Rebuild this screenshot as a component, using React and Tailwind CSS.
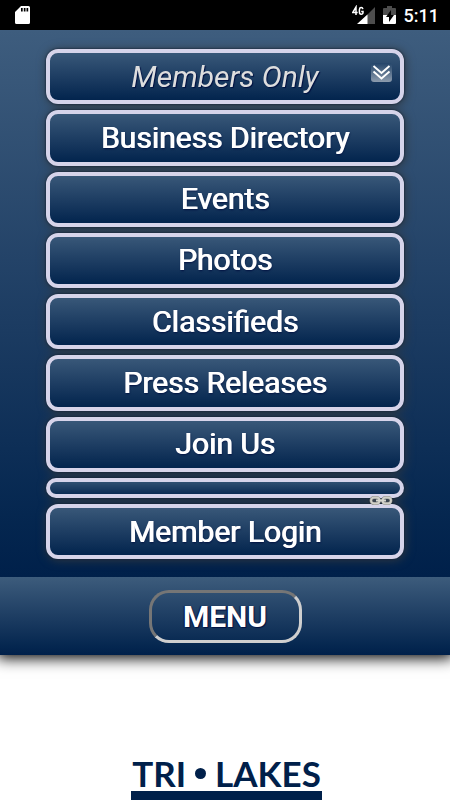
import React from "react";

const links = [
  "Business Directory",
  "Events",
  "Photos",
  "Classifieds",
  "Press Releases",
  "Join Us",
];

const panel =
  "relative flex w-full items-center justify-center rounded-[12px] border-4 border-[#d6d4ea] bg-linear-to-b from-[#3d5c7c] to-[#00204a] bg-origin-border";

const label =
  "text-[30px] leading-9 text-white [text-shadow:1px_0_0_#fff,1px_1px_2px_#001040]";

function StatusBar() {
  return (
    <header className="flex h-[30px] items-center justify-between bg-black pr-[11px] pl-[15px] text-white">
      <svg width="15" height="18" viewBox="0 0 15 18" aria-hidden="true">
        <path
          fill="#fff"
          fillRule="evenodd"
          d="M6 0h7.500a1.500 1.500 0 0 1 1.500 1.500v15a1.500 1.500 0 0 1-1.500 1.500h-12A1.500 1.500 0 0 1 0 16.500V6zM6 2v3.500h1.700V2zM8.800 2v3.500h1.700V2zM11.500 2v3.500h1.700V2z"
        />
      </svg>
      <div className="flex items-center">
        <svg width="24" height="20" viewBox="0 0 24 20" aria-hidden="true">
          <path fill="#4d4d4d" d="M23 2v17H6z" />
          <path fill="#fff" d="M15.500 9.500V19H5z" />
          <g fill="none" stroke="#fff" strokeWidth="1.500">
            <path d="M4 10V2L.8 7.400h4.900" />
            <path d="M10.900 4.200C10.500 1.900 7.400 2 7.400 4.700v2.200c0 3 3.500 2.900 3.600.8V6.400H9.200" />
          </g>
        </svg>
        <svg className="ml-[7px]" width="13" height="20" viewBox="0 0 13 20" aria-hidden="true">
          <path fill="#4d4d4d" d="M4 1h5v2h3q1 0 1 1v7H0V4q0-1 1-1h3z" />
          <path fill="#fff" d="M0 10h13v8q0 1-1 1H1q-1 0-1-1z" />
          <path fill="#000" d="M8 5 3 12h3v5l5-7H8z" />
        </svg>
        <span className="ml-[8px] pt-px text-[18px] leading-5 font-medium">5:11</span>
      </div>
    </header>
  );
}

function ChevronBadge() {
  return (
    <svg className="absolute top-[10px] right-2" width="21" height="19" viewBox="0 0 21 19" aria-hidden="true">
      <defs>
        <linearGradient id="badge" x2="0" y2="1">
          <stop stopColor="#24456a" />
          <stop offset="1" stopColor="#8d9cae" />
        </linearGradient>
      </defs>
      <rect width="21" height="19" rx="3" fill="url(#badge)" />
      <path d="m2.500 3 8 7 8-7M2.500 8.500l8 7 8-7" fill="none" stroke="#fff" strokeWidth="1.900" />
    </svg>
  );
}

function ChainIcon() {
  return (
    <svg className="absolute right-[7px] -bottom-[11px]" width="24" height="9" viewBox="0 0 24 9" aria-hidden="true">
      <g fill="#3a4450" stroke="#8c8c88" strokeWidth="3">
        <rect x="2" y="1.500" width="8.500" height="6" rx="3" />
        <rect x="13.500" y="1.500" width="8.500" height="6" rx="3" />
      </g>
      <g fill="none" stroke="#d0d0c8" strokeWidth="1.800">
        <rect x="2" y="1.500" width="8.500" height="6" rx="3" />
        <rect x="13.500" y="1.500" width="8.500" height="6" rx="3" />
      </g>
      <path d="M7 4.500h10" stroke="#d8d8d0" strokeWidth="2" />
    </svg>
  );
}

export default function App() {
  return (
    <div className="min-h-screen overflow-hidden bg-white font-['Roboto','Liberation_Sans',sans-serif]">
      <StatusBar />
      <div className="shadow-[0_0_14px_3px_#000]">
        <nav className="bg-linear-to-b from-[#3e5d7e] to-[#00204a] px-[46px] pt-[19px] pb-[18px]">
          <div className="[filter:drop-shadow(0_0_1px_#0c1c30)_drop-shadow(1px_1px_5px_#303840)]">
            <div className="grid h-[423px] auto-rows-fr gap-[6px]">
              <button type="button" className={panel}>
                <span className="text-[30px] leading-9 text-[#dedede] italic [text-shadow:1px_1px_1px_#001040]">
                  Members Only
                </span>
                <ChevronBadge />
              </button>
              {links.map((text) => (
                <a key={text} href="#" className={panel}>
                  <span className={label}>{text}</span>
                </a>
              ))}
            </div>
            <div className={`${panel} z-10 mt-[6px] h-[20px]`}>
              <ChainIcon />
            </div>
            <a href="#" className={`${panel} mt-[6px] h-[55px]`}>
              <span className={label}>Member Login</span>
            </a>
          </div>
        </nav>
        <div className="flex h-[78px] items-center justify-center bg-linear-to-b from-[#3d5c7c] to-[#00204a]">
          <button
            type="button"
            className="h-[53px] w-[153px] rounded-[20px] border-[3px] border-t-[#767676] border-r-[#cfcfcf] border-b-[#cfcfcf] border-l-[#767676] pt-px text-[30px] leading-9 font-bold text-white [text-shadow:1px_1px_1px_#001040,-1px_0_1px_#001040]"
          >
            MENU
          </button>
        </div>
      </div>
      <main className="flex h-[145px] justify-center overflow-hidden pt-[100px] pl-[3px]">
        <div className="h-[60px] w-[191px] text-center font-['Lato',sans-serif] text-[35px] leading-9 font-bold text-[#00204a]">
          <div className="flex items-center justify-center gap-[9px]">
            <span>TRI</span>
            <span className="size-[11px] rounded-full bg-[#00204a]" />
            <span>LAKES</span>
          </div>
          <div className="h-6 bg-[#00204a]" />
        </div>
      </main>
    </div>
  );
}
